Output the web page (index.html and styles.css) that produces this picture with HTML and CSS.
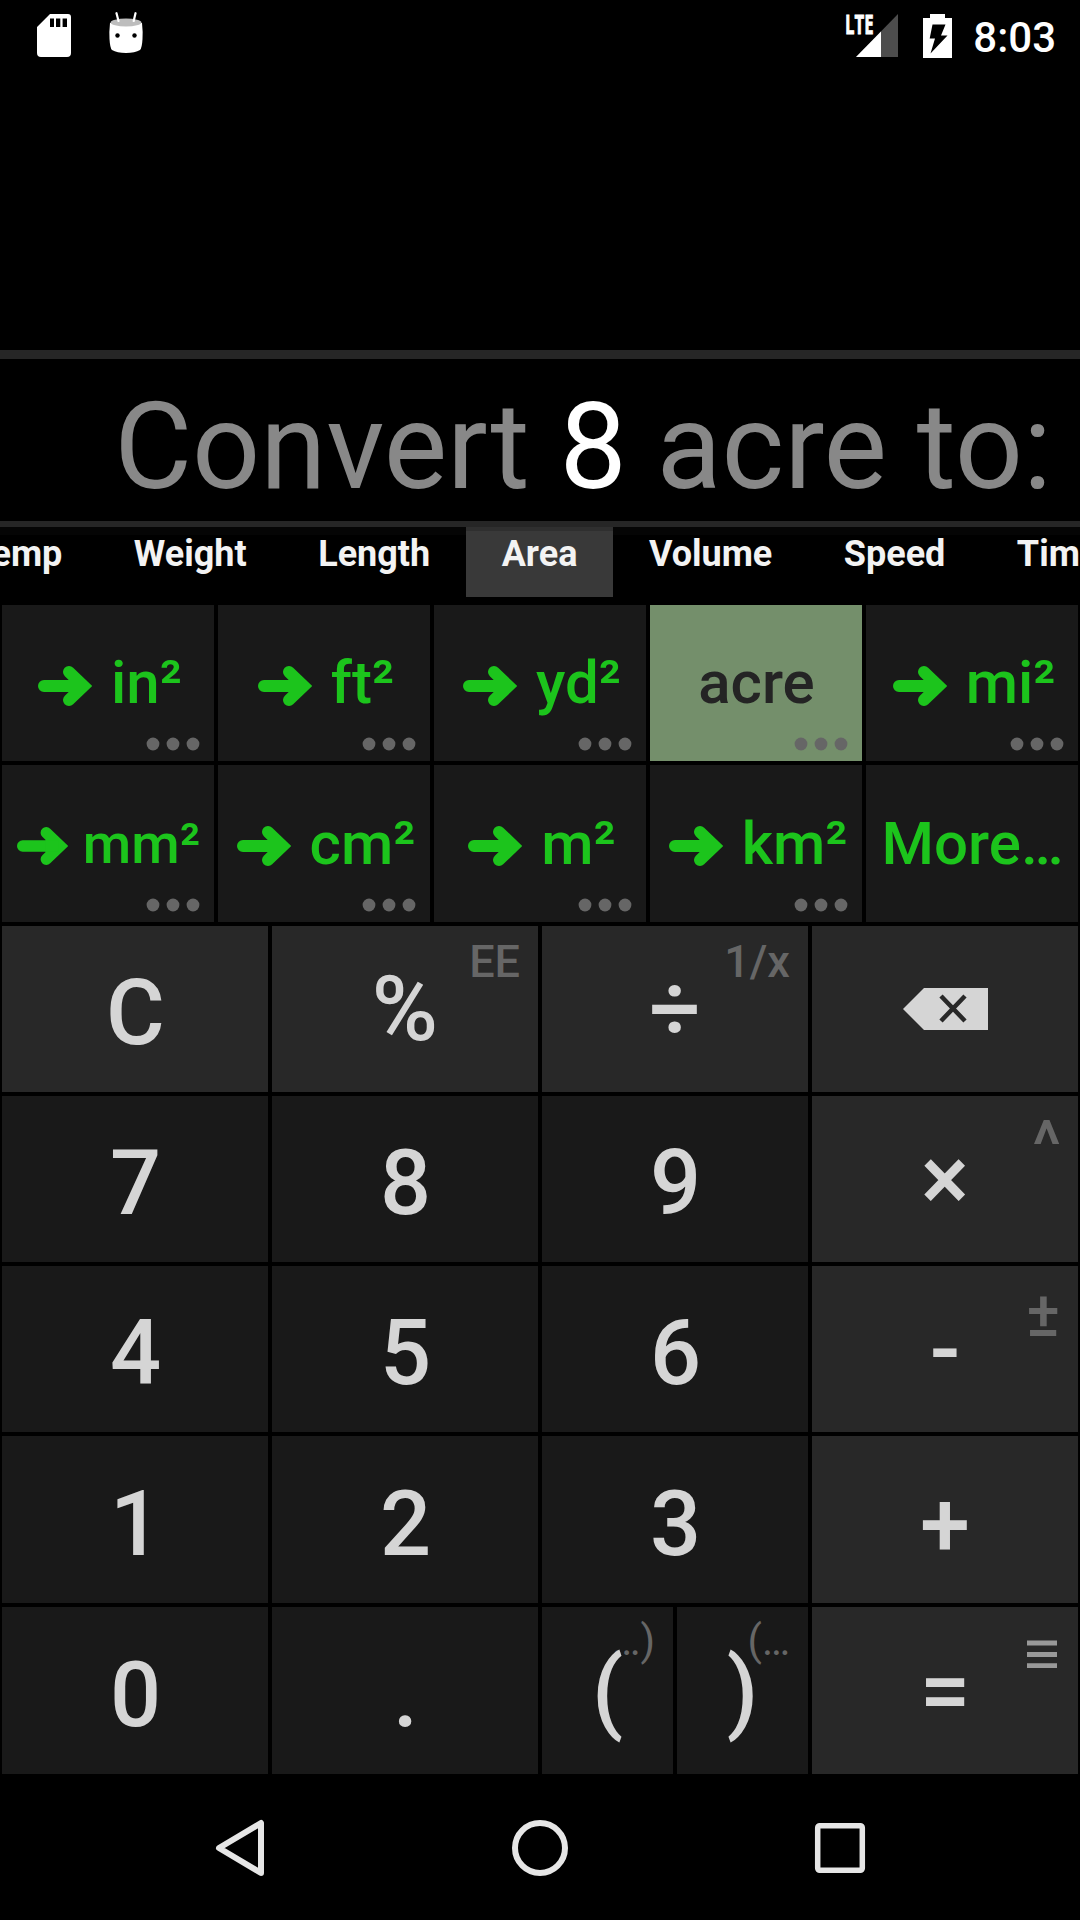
FILE: index.html
```html
<!DOCTYPE html>
<html lang="en">
<head>
<meta charset="utf-8">
<title>Calculator</title>
<link rel="stylesheet" href="styles.css">
</head>
<body>
<svg class="defs" width="0" height="0" aria-hidden="true">
  <symbol id="arrow" viewBox="0 0 54 40"><path d="M6 20H40M31 6L45.500 20L31 34" fill="none" stroke="currentColor" stroke-width="12" stroke-linecap="round" stroke-linejoin="miter"/><path d="M30 14H44V26H30Z" fill="currentColor"/></symbol>
  <symbol id="dots" viewBox="0 0 54 14"><circle cx="7" cy="7" r="6.400"/><circle cx="27" cy="7" r="6.400"/><circle cx="47" cy="7" r="6.400"/></symbol>
</svg>
<div class="screen">
  <header class="status">
    <div class="status-left">
      <svg class="sd" viewBox="0 0 34 43"><path fill="#fff" fill-rule="evenodd" d="M13 0H31Q34 0 34 3V39Q34 43 30 43H4Q0 43 0 39V13ZM13 4.500V13H17V4.500ZM19 4.500V13H23.300V4.500ZM25.600 4.500V13H30V4.500Z"/></svg>
      <svg class="droid" viewBox="0 0 34 41"><path d="M1 11Q0 20 .5 27Q1 36 3 38Q8 41 17 41Q26 41 31 38Q33 36 33.500 27Q34 20 33 11Z" fill="#fff"/><ellipse cx="17" cy="10.500" rx="15.500" ry="4" fill="#bdbdbd"/><path d="M7.500 1.200L9.500 9M26.500 1.200L24.700 9" stroke="#fff" stroke-width="2.200" stroke-linecap="round"/><circle cx="8.500" cy="23.500" r="2.200"/><circle cx="25.500" cy="23.500" r="2.200"/></svg>
    </div>
    <div class="status-right">
      <div class="signal">
        <svg viewBox="0 0 42 43"><path d="M42 0V43H0Z" fill="#4d4d4d"/><path d="M25 17.400V43H0Z" fill="#fff"/></svg>
        <span class="lte">LTE</span>
      </div>
      <svg class="battery" viewBox="0 0 29 44"><path fill="#fff" d="M7 0H22V4H29V44H0V4H7Z"/><path d="M9.500 10.500H22.500L18 21.500H24.500L7.500 39.500L12 24.500H6.700Z"/></svg>
      <span class="clock">8:03</span>
    </div>
  </header>
  <div class="history"></div>
  <div class="display">Convert&nbsp;<span class="value">8</span>&nbsp;acre to:</div>
  <nav class="tabs">
    <span class="tab">Temp</span><span class="tab">Weight</span><span class="tab">Length</span><span class="tab selected">Area</span><span class="tab">Volume</span><span class="tab">Speed</span><span class="tab">Time</span>
  </nav>
  <section class="units">
    <div class="unit convert"><svg class="arrow"><use href="#arrow"/></svg>in²<svg class="dots"><use href="#dots"/></svg></div>
    <div class="unit convert"><svg class="arrow"><use href="#arrow"/></svg>ft²<svg class="dots"><use href="#dots"/></svg></div>
    <div class="unit convert"><svg class="arrow"><use href="#arrow"/></svg>yd²<svg class="dots"><use href="#dots"/></svg></div>
    <div class="unit current">acre<svg class="dots"><use href="#dots"/></svg></div>
    <div class="unit convert"><svg class="arrow"><use href="#arrow"/></svg>mi²<svg class="dots"><use href="#dots"/></svg></div>
    <div class="unit compact"><svg class="arrow"><use href="#arrow"/></svg>mm²<svg class="dots"><use href="#dots"/></svg></div>
    <div class="unit convert"><svg class="arrow"><use href="#arrow"/></svg>cm²<svg class="dots"><use href="#dots"/></svg></div>
    <div class="unit convert"><svg class="arrow"><use href="#arrow"/></svg>m²<svg class="dots"><use href="#dots"/></svg></div>
    <div class="unit convert"><svg class="arrow"><use href="#arrow"/></svg>km²<svg class="dots"><use href="#dots"/></svg></div>
    <div class="unit">More…</div>
  </section>
  <section class="keys">
    <div class="key op">C</div>
    <div class="key op raised">%<span class="hint">EE</span></div>
    <div class="key op raised">÷<span class="hint">1/x</span></div>
    <div class="key op"><svg class="backspace" viewBox="0 0 85 42"><path d="M21 0H85V42H21L0 21Z" fill="#d5d5d5"/><path d="M38 8L62 33M62 8L38 33" stroke="#282828" stroke-width="4.500"/></svg></div>
    <div class="key">7</div>
    <div class="key">8</div>
    <div class="key">9</div>
    <div class="key op raised">×<span class="hint caret">^</span></div>
    <div class="key">4</div>
    <div class="key">5</div>
    <div class="key">6</div>
    <div class="key op raised">-<span class="hint plusminus">±</span></div>
    <div class="key">1</div>
    <div class="key">2</div>
    <div class="key">3</div>
    <div class="key op plus">+</div>
    <div class="key">0</div>
    <div class="key">.</div>
    <div class="pair">
      <div class="key raised"><span class="hint thin">…)</span><span class="glyph">(</span></div>
      <div class="key raised"><span class="hint thin">(…</span><span class="glyph">)</span></div>
    </div>
    <div class="key op raised">=<svg class="menu" viewBox="0 0 30 28"><path d="M0 3H30M0 14.400H30M0 25.700H30" stroke="#999" stroke-width="5"/></svg></div>
  </section>
  <footer class="navbar">
    <svg viewBox="0 0 60 60"><path d="M51 5V55L9 30Z" fill="none" stroke="#e6e6e6" stroke-width="6" stroke-linejoin="round"/></svg>
    <svg viewBox="0 0 60 60"><circle cx="30" cy="30" r="25" fill="none" stroke="#e6e6e6" stroke-width="6"/></svg>
    <svg viewBox="0 0 60 60"><rect x="7.700" y="7.700" width="44.600" height="44.600" rx="2" fill="none" stroke="#e6e6e6" stroke-width="5.500"/></svg>
  </footer>
</div>
</body>
</html>
```
FILE: styles.css
```css
* { box-sizing: border-box; }
body { margin: 0; background: #000; font-family: Roboto, sans-serif; }
svg { display: block; flex: none; }
.defs { position: absolute; }
.screen { width: 1080px; height: 1920px; background: #000; overflow: hidden; display: flex; flex-direction: column; }

.status { height: 72px; flex: none; display: flex; justify-content: space-between; padding: 0 24px 0 37px; color: #fff; }
.status-left, .status-right { display: flex; align-items: flex-start; }
.sd { width: 34px; height: 43px; margin-top: 14px; }
.droid { width: 34px; height: 41px; margin: 12px 0 0 38px; }
.signal { position: relative; margin-top: 14px; }
.signal svg { width: 42px; height: 43px; }
.lte { position: absolute; left: -11px; top: -2px; font: 700 27px/24px "Open Sans", sans-serif; -webkit-text-stroke: 0.8px #fff; transform: scaleX(.62); transform-origin: 0 0; }
.battery { width: 29px; height: 44px; margin: 14px 0 0 25px; }
.clock { font-size: 42px; line-height: 50px; font-weight: 500; margin: 13px 0 0 21px; }

.history { height: 278px; flex: none; }
.display { height: 177px; flex: none; border-top: 9px solid #262626; border-bottom: 6px solid #262626; display: flex; justify-content: flex-end; align-items: center; padding: 13px 28px 0 0; font-size: 119.7px; line-height: 140px; color: #888; }
.value { color: #fff; }

.tabs { height: 76px; flex: none; display: flex; align-items: flex-start; justify-content: flex-start; margin-left: -65px; background: linear-gradient(#050505 0 8px, #000 8px); }
.tab { flex: none; height: 70px; padding: 6px 35.75px 0; font-size: 36px; line-height: 42px; font-weight: 700; color: #f3f3f3; }
.tab.selected { background: linear-gradient(#2f2f2f 0 4px, #393939 4px); }

.units { flex: none; display: grid; grid-template-columns: repeat(5, 212px); grid-template-rows: 156px 157px; gap: 4px; padding: 2px 2px 4px; }
.unit { position: relative; display: flex; align-items: center; justify-content: center; padding-left: 1px; background: #191919; color: #1cc41c; font-size: 60px; font-weight: 500; line-height: 70px; white-space: nowrap; }
.unit.convert { gap: 19px; padding-left: 4px; }
.unit.current { background: #748f6b; color: #242424; }
.unit.compact { font-size: 55.6px; gap: 15px; padding-left: 1px; }
.arrow { width: 54px; height: 40px; margin-top: 5px; }
.compact .arrow { width: 51px; height: 38px; }
.dots { position: absolute; right: 14px; bottom: 10px; width: 54px; height: 14px; fill: #666; }

.keys { flex: none; display: grid; grid-template-columns: repeat(4, 266px); grid-template-rows: 166px 166px 166px 167px 167px; gap: 4px; padding: 0 2px; }
.key { position: relative; display: flex; align-items: center; justify-content: center; padding: 10px 0 0 1px; background: #191919; color: #d5d5d5; font-size: 90px; line-height: 106px; font-weight: 500; }
.key.op { background: #282828; }
.key.raised { padding: 2px 0 0; }
.key.plus { padding: 12px 0 0; }
.pair { display: grid; grid-template-columns: 131px 131px; gap: 4px; }
.hint { position: absolute; right: 18px; top: 10px; font-size: 45px; line-height: 52px; color: #666; }
.hint.thin { font-size: 42px; font-weight: 400; top: 8px; }
.hint.caret { right: 17px; font-size: 67px; line-height: 78px; top: 10px; }
.hint.plusminus { font-size: 63px; line-height: 74px; right: 18px; top: 12px; }
.glyph { position: relative; }
.backspace { width: 85px; height: 42px; margin-top: -11px; }
.menu { position: absolute; right: 21px; top: 33px; width: 30px; height: 28px; }

.navbar { flex: 1; display: flex; align-items: center; justify-content: center; gap: 240px; padding-top: 2px; }
.navbar svg { width: 60px; height: 60px; }
```
